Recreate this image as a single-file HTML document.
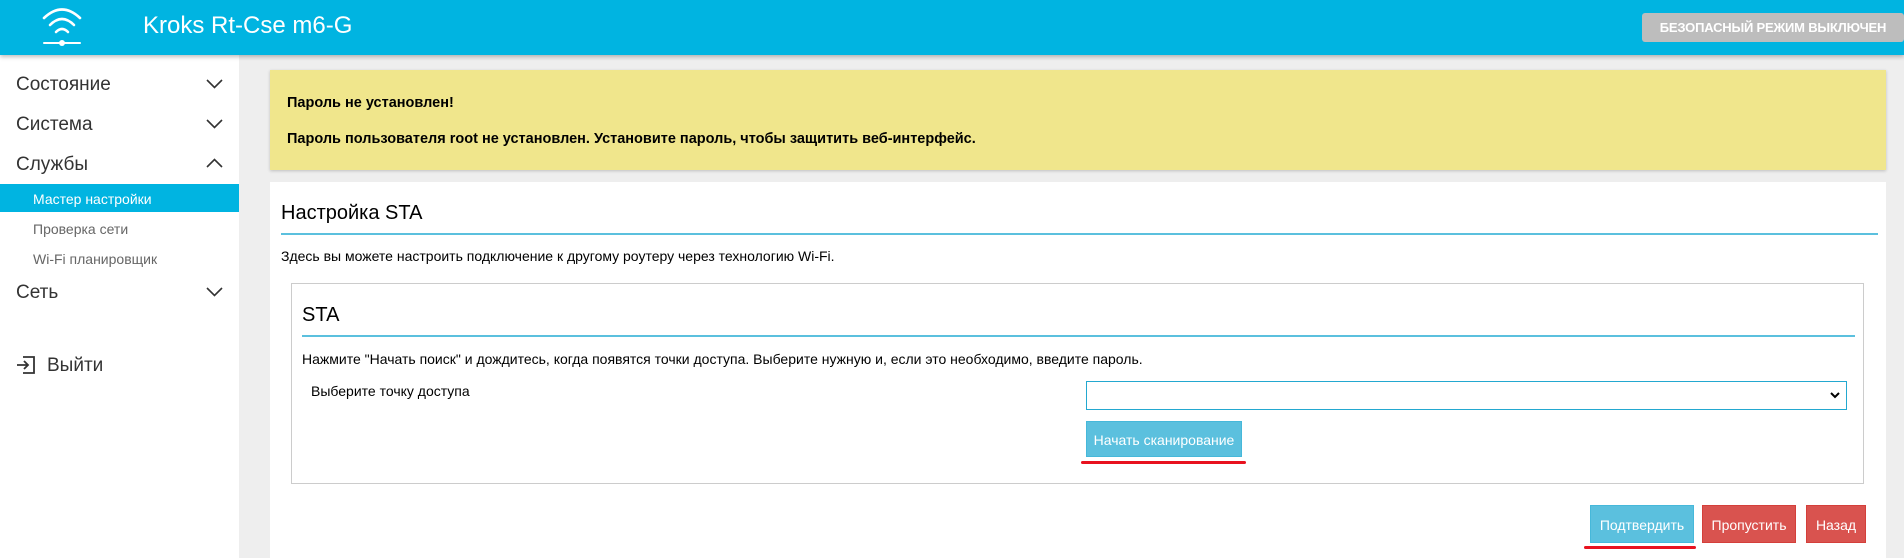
<!DOCTYPE html>
<html><head><meta charset="utf-8"><style>
*{box-sizing:border-box;margin:0;padding:0}
body{width:1904px;height:558px;overflow:hidden;background:#eee;font-family:"Liberation Sans",sans-serif;position:relative;color:#000}
.hdr{position:absolute;left:0;top:0;width:1904px;height:55px;background:#00b4e1;box-shadow:0 2px 4px rgba(0,0,0,.25);z-index:2}
.title{position:absolute;left:143px;top:12px;color:#fff;font-size:24px}
.badge{position:absolute;left:1642px;top:13px;width:262px;height:29px;background:#bdbdbd;border-radius:3px;color:#fff;font-weight:bold;font-size:13px;line-height:29px;text-align:center;white-space:nowrap;letter-spacing:-0.2px}
.side{position:absolute;left:0;top:55px;width:239px;height:503px;background:#fff}
.m{position:absolute;left:16px;font-size:19px;color:#333}
.s{position:absolute;left:33px;font-size:14px;color:#666}
.chev{position:absolute;left:206px;width:17px;height:10px}
.act{position:absolute;left:0;top:129px;width:239px;height:28px;background:#00b4e1}
.abs{position:absolute}
.btn{position:absolute;color:#fff;font-size:14px;text-align:center}
</style></head><body>
<div class="hdr">
<svg class="abs" style="left:40px;top:5px" width="44" height="44" viewBox="0 0 44 44" fill="none" stroke="#fff" stroke-width="2.6" stroke-linecap="round">
<path d="M4 13 Q22 -4 40 13"/><path d="M10 20 Q22 8 34 20"/><path d="M16 27 Q22 21 28 27"/>
<path d="M4 38 H40" stroke-width="2"/><circle cx="22" cy="38" r="3" fill="#fff" stroke="none"/>
</svg>
<div class="title">Kroks Rt-Cse m6-G</div>
<div class="badge">БЕЗОПАСНЫЙ РЕЖИМ ВЫКЛЮЧЕН</div>
</div>
<div class="side">
<div class="m" style="top:19px">Состояние</div>
<svg class="chev" style="top:24px" viewBox="0 0 17 10"><path d="M1 1 L8.5 8.5 L16 1" stroke="#333" stroke-width="1.6" fill="none"/></svg>
<div class="m" style="top:59px">Система</div>
<svg class="chev" style="top:64px" viewBox="0 0 17 10"><path d="M1 1 L8.5 8.5 L16 1" stroke="#333" stroke-width="1.6" fill="none"/></svg>
<div class="m" style="top:99px">Службы</div>
<svg class="chev" style="top:103px" viewBox="0 0 17 10"><path d="M1 9 L8.5 1.5 L16 9" stroke="#333" stroke-width="1.6" fill="none"/></svg>
<div class="act"></div>
<div class="s" style="top:136px;color:#fff">Мастер настройки</div>
<div class="s" style="top:166px">Проверка сети</div>
<div class="s" style="top:196px">Wi-Fi планировщик</div>
<div class="m" style="top:227px">Сеть</div>
<svg class="chev" style="top:232px" viewBox="0 0 17 10"><path d="M1 1 L8.5 8.5 L16 1" stroke="#333" stroke-width="1.6" fill="none"/></svg>
<svg class="abs" style="left:16px;top:300px" width="20" height="20" viewBox="0 0 20 20" fill="none" stroke="#333" stroke-width="1.8"><path d="M7 2 H18 V18 H7"/><path d="M1 10 H12 M8 6 L12 10 L8 14"/></svg>
<div class="m" style="top:300px;left:47px">Выйти</div>
</div>
<div class="abs" style="left:270px;top:70px;width:1616px;height:100px;background:#f0e68c;box-shadow:0 1px 3px rgba(0,0,0,.2)"></div>
<div class="abs" style="left:287px;top:95px;font-size:14.5px;font-weight:bold">Пароль не установлен!</div>
<div class="abs" style="left:287px;top:131px;font-size:14.5px;font-weight:bold">Пароль пользователя root не установлен. Установите пароль, чтобы защитить веб-интерфейс.</div>
<div class="abs" style="left:270px;top:182px;width:1616px;height:376px;background:#fff"></div>
<div class="abs" style="left:281px;top:202px;font-size:20px">Настройка STA</div>
<div class="abs" style="left:281px;top:233px;width:1597px;height:2px;background:#5bc0de"></div>
<div class="abs" style="left:281px;top:248px;font-size:14px">Здесь вы можете настроить подключение к другому роутеру через технологию Wi-Fi.</div>
<div class="abs" style="left:291px;top:283px;width:1573px;height:201px;border:1px solid #ccc"></div>
<div class="abs" style="left:302px;top:304px;font-size:20px">STA</div>
<div class="abs" style="left:302px;top:335px;width:1553px;height:2px;background:#5bc0de"></div>
<div class="abs" style="left:302px;top:351px;font-size:14px">Нажмите "Начать поиск" и дождитесь, когда появятся точки доступа. Выберите нужную и, если это необходимо, введите пароль.</div>
<div class="abs" style="left:311px;top:383px;font-size:14px">Выберите точку доступа</div>
<div class="abs" style="left:1086px;top:381px;width:761px;height:29px;border:1px solid #23a8d0;background:#fff"></div>
<svg class="abs" style="left:1830px;top:392px" width="10" height="7" viewBox="0 0 10 7"><path d="M1 1 L5 5 L9 1" stroke="#000" stroke-width="2" fill="none"/></svg>
<div class="btn" style="left:1086px;top:421px;width:156px;height:36px;line-height:36px;background:#5bc0de;border:1px solid #46b8da">Начать сканирование</div>
<div class="abs" style="left:1081px;top:461px;width:165px;height:3px;background:#e8121f;border-radius:2px"></div>
<div class="btn" style="left:1590px;top:505px;width:104px;height:38px;line-height:38px;background:#5bc0de;border:1px solid #46b8da">Подтвердить</div>
<div class="btn" style="left:1702px;top:505px;width:94px;height:38px;line-height:38px;background:#d9534f;border:1px solid #d43f3a">Пропустить</div>
<div class="btn" style="left:1806px;top:505px;width:60px;height:38px;line-height:38px;background:#d9534f;border:1px solid #d43f3a">Назад</div>
<div class="abs" style="left:1584px;top:546px;width:112px;height:3px;background:#e8121f;border-radius:2px"></div>
</body></html>
